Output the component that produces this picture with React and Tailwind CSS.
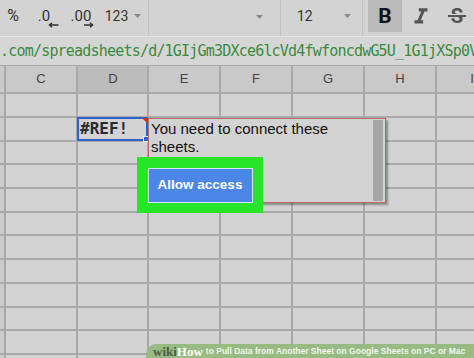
import React from 'react';
import { MdFormatItalic, MdStrikethroughS } from 'react-icons/md';

function Caret() {
  return (
    <svg width="7" height="4" viewBox="0 0 7 4" className="block">
      <path d="M0 0h7L3.5 4z" fill="#8a8a8a" />
    </svg>
  );
}

const cols = ['', 'C', 'D', 'E', 'F', 'G', 'H', 'I'];
const ROWS = 13;

export default function App() {
  const cells = [];
  for (let r = 0; r < ROWS; r++) {
    for (let c = 0; c < cols.length; c++) {
      const key = `${r}-${c}`;
      if (r === 0) {
        cells.push(
          <div
            key={key}
            className={`overflow-hidden flex items-center ${c === 2 ? 'bg-[#bcbcbc]' : 'bg-[#c9c9c9]'}`}
          >
            <div className="w-[70px] shrink-0 text-center text-[13px] text-[#444]">{cols[c]}</div>
          </div>
        );
      } else if (c === 0) {
        cells.push(<div key={key} className="bg-[#cbcbcb]" />);
      } else if (r === 2 && c === 2) {
        cells.push(
          <div key={key} className="relative bg-[#d3d3d3] flex items-center">
            <div className="absolute -inset-[1px] border-2 border-[#2f62c9]" />
            <div className="absolute right-[0px] top-[0px] w-0 h-0 border-t-[5px] border-t-[#c0392b] border-l-[5px] border-l-transparent" />
            <div className="absolute right-[-2px] bottom-[-2px] w-[6px] h-[6px] bg-[#2f62c9] border border-[#dfe8fa]" />
            <span className="pl-[2px] font-['DejaVu_Sans_Mono',monospace] font-bold text-[16px] text-[#2a2a2a] leading-none">#REF!</span>
          </div>
        );
      } else {
        cells.push(<div key={key} className="bg-[#d3d3d3]" />);
      }
    }
  }

  return (
    <div className="relative w-[474px] h-[358px] overflow-hidden bg-[#d3d3d3] font-['Liberation_Sans',Arial,sans-serif]">
      {/* Toolbar */}
      <div className="h-[37px] flex items-stretch bg-[#d3d3d3] border-b border-[#e4e4e4] font-['Roboto',sans-serif] text-[#333]">
        <div className="w-[26px] flex items-center justify-center text-[16px] pb-[4px]">%</div>
        <div className="w-[36px] flex items-center justify-center pb-[4px]">
          <div className="relative text-[15px] leading-none">
            .0
            <svg className="absolute left-[10px] top-[13px]" width="11" height="6" viewBox="0 0 11 6">
              <path d="M10.5 3H2M4 0.8L1.5 3 4 5.2" stroke="#333" strokeWidth="1.5" fill="none" />
            </svg>
          </div>
        </div>
        <div className="w-[38px] flex items-center justify-center pb-[4px]">
          <div className="relative text-[15px] leading-none">
            .00
            <svg className="absolute left-[13px] top-[13px]" width="10" height="6" viewBox="0 0 10 6">
              <path d="M0 3h8M6 0.8L8.5 3 6 5.2" stroke="#333" strokeWidth="1.5" fill="none" />
            </svg>
          </div>
        </div>
        <div className="w-[46px] flex items-center justify-center gap-[6px] pb-[4px]">
          <span className="text-[14px]">123</span>
          <Caret />
        </div>
        <div className="ml-[2px] w-px bg-[#c2c2c2]" />
        <div className="w-[131px] flex items-center justify-end pr-[17px] pb-[3px]">
          <Caret />
        </div>
        <div className="w-px bg-[#c2c2c2]" />
        <div className="w-[81px] flex items-center pl-[16px] pr-[11px] pb-[4px]">
          <span className="text-[14px]">12</span>
          <span className="ml-auto">
            <Caret />
          </span>
        </div>
        <div className="w-px bg-[#c2c2c2]" />
        <div className="ml-[5px] w-[34px] h-[32px] bg-[#b9b9b9] flex items-center justify-center">
          <span className="text-[21px] font-bold text-[#111] leading-none">B</span>
        </div>
        <div className="w-[38px] flex items-center justify-center pb-[3px] text-[#555]">
          <MdFormatItalic size={26} />
        </div>
        <div className="w-[34px] flex items-center justify-center pb-[3px] text-[#555]">
          <MdStrikethroughS size={24} />
        </div>
      </div>

      {/* Formula bar */}
      <div className="h-[29px] flex items-center bg-[#d6d6d6] border-b border-[#a8a8a8] overflow-hidden whitespace-nowrap">
        <span className="font-['DejaVu_Sans_Mono',monospace] text-[15px] tracking-[-0.8px] text-[#3a8a40]">
          .com/spreadsheets/d/1GIjGm3DXce6lcVd4fwfoncdwG5U_1G1jXSp0V
        </span>
      </div>

      {/* Grid */}
      <div className="grid grid-cols-[4px_70px_69px_70px_70px_70px_70px_1fr] grid-rows-[26px_22px_22px_21px_22px_22px_21px_22px_22px_22px_21px_22px_1fr] gap-[2px] bg-[#a9a9a9] h-[292px]">
        {cells}
      </div>

      {/* Popup */}
      <div className="absolute left-[148px] top-[118px] w-[238px] h-[85px] bg-[#d3d3d3] border border-[#b66a6a] shadow-[2px_2px_2px_rgba(0,0,0,0.35)] flex">
        <div className="flex-1 pl-[2px] pt-[1px] text-[15px] leading-[18px] text-[#111]">
          You need to connect these<br />sheets.
        </div>
        <div className="w-[10px] my-[1px] mr-[2px] bg-[#a6a6a6]" />
      </div>

      {/* Highlighted button */}
      <div className="absolute left-[137px] top-[157px] w-[126px] h-[56px] bg-[#27e62a] flex items-center justify-center">
        <div className="w-[105px] h-[35px] bg-[#4c86e6] border border-[#dce6f8] flex items-center justify-center text-white font-bold text-[13.5px]">
          Allow access
        </div>
      </div>

      {/* Watermark */}
      <div className="absolute left-[146px] top-[344px] right-0 bottom-0 bg-[#97bb82] rounded-tl-[10px] flex items-center pl-[7px] whitespace-nowrap">
        <span className="font-['Liberation_Serif',serif] font-bold text-[13px] leading-none text-[#4d5c44]">wiki</span>
        <span className="font-['Liberation_Serif',serif] font-bold text-[13px] leading-none text-white">How</span>
        <span className="ml-[3px] font-bold text-[8.5px] text-[#f2f6ee]">to Pull Data from Another Sheet on Google Sheets on PC or Mac</span>
      </div>
    </div>
  );
}
